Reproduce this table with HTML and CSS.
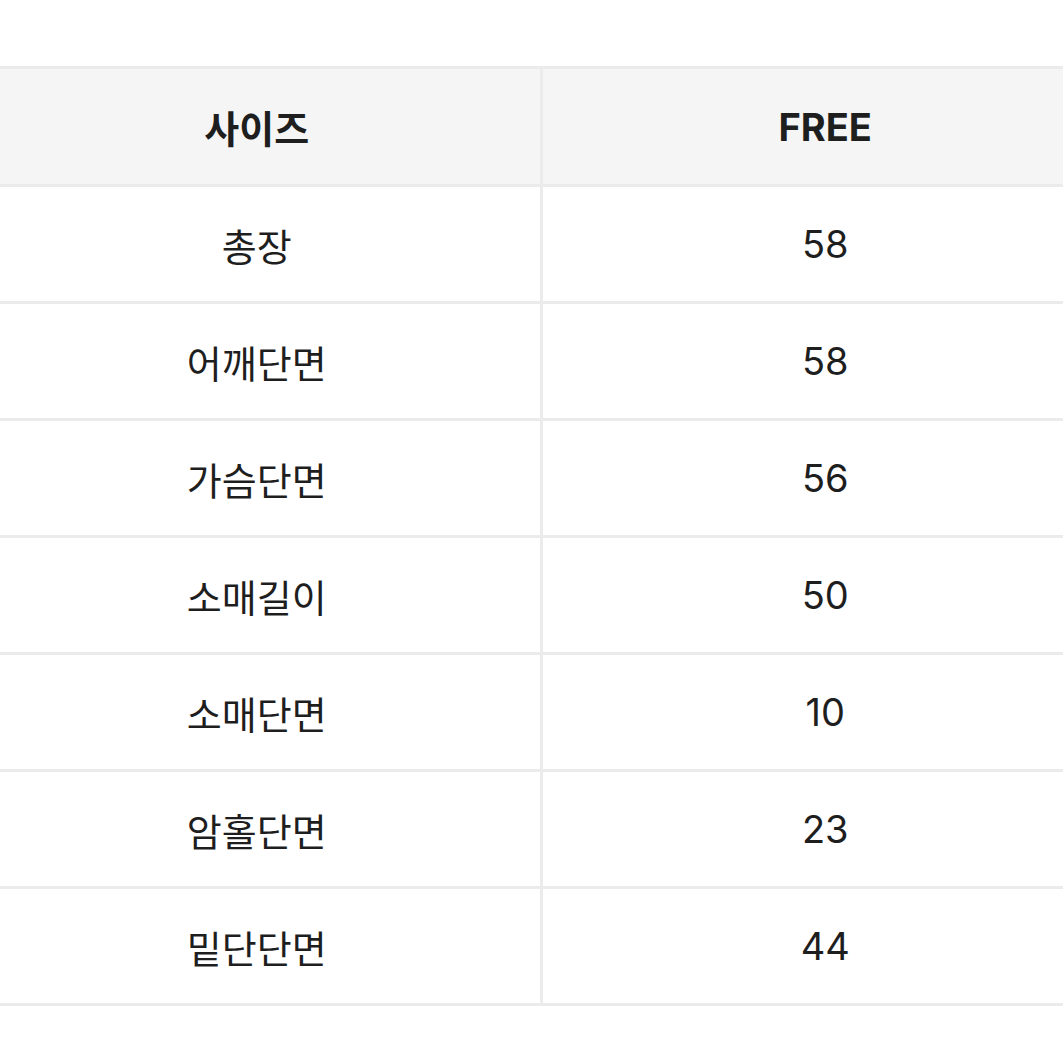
FILE: index.html
```html
<!DOCTYPE html>
<html lang="ko">
<head>
<meta charset="utf-8">
<link rel="stylesheet" href="styles.css">
</head>
<body>
<div class="wrap">
<table class="size-table">
  <thead>
    <tr><th>사이즈</th><th>FREE</th></tr>
  </thead>
  <tbody>
    <tr><td>총장</td><td>58</td></tr>
    <tr><td>어깨단면</td><td>58</td></tr>
    <tr><td>가슴단면</td><td>56</td></tr>
    <tr><td>소매길이</td><td>50</td></tr>
    <tr><td>소매단면</td><td>10</td></tr>
    <tr><td>암홀단면</td><td>23</td></tr>
    <tr><td>밑단단면</td><td>44</td></tr>
  </tbody>
</table>
</div>
</body>
</html>
```
FILE: styles.css
```css
html, body {
  margin: 0;
  padding: 0;
  background: #ffffff;
  overflow: hidden;
}
.wrap {
  padding-top: 66px;
  margin-left: -29px;
  width: 1140px;
}
.size-table {
  border-collapse: collapse;
  width: 1140px;
  table-layout: fixed;
  font-family: Inter, "Noto Sans CJK KR", sans-serif;
  color: #1e1e1e;
}
.size-table th,
.size-table td {
  border: 3px solid #ebebeb;
  text-align: center;
  vertical-align: middle;
  padding: 0;
  font-size: 38px;
}
.size-table th {
  background: #f5f5f5;
  font-weight: 700;
  height: 115px;
}
.size-table td {
  font-weight: 400;
  height: 114px;
}
```
